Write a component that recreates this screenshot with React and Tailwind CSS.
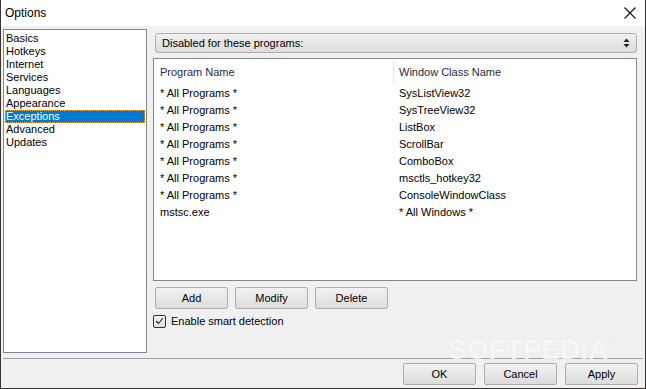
import React from "react";

const font = { fontFamily: '"Liberation Sans", Arial, sans-serif' };

const sections = [
  "Basics",
  "Hotkeys",
  "Internet",
  "Services",
  "Languages",
  "Appearance",
  "Exceptions",
  "Advanced",
  "Updates"
];

const rows = [
  ["* All Programs *", "SysListView32"],
  ["* All Programs *", "SysTreeView32"],
  ["* All Programs *", "ListBox"],
  ["* All Programs *", "ScrollBar"],
  ["* All Programs *", "ComboBox"],
  ["* All Programs *", "msctls_hotkey32"],
  ["* All Programs *", "ConsoleWindowClass"],
  ["mstsc.exe", "* All Windows *"]
];

const Btn = ({ children, className = "" }) => (
  <button
    className={`h-[22px] w-[73px] rounded-[2px] border border-[#adadad] bg-linear-to-b from-[#f2f2f2] to-[#dcdcdc] text-[11px] text-black ${className}`}>
    {children}
  </button>
);

export default function App() {
  return (
    <div
      className="relative flex h-[389px] w-[646px] flex-col overflow-hidden border-x border-b border-[#3a3430] bg-[#f0f0f0] text-[11px] text-black"
      style={font}>
      {/* title bar */}
      <div className="flex h-[26px] items-center justify-between bg-white pl-[4px] pr-[9px]">
        <span className="text-[12px]">Options</span>
        <svg width="12" height="12" viewBox="0 0 12 12">
          <path d="M0.5 0.5 L11.5 11.5 M11.5 0.5 L0.5 11.5" stroke="#111" strokeWidth="1.1" />
        </svg>
      </div>

      <div className="flex h-[331px]">
        {/* sections list */}
        <div className="ml-[2px] mt-[3px] h-[324px] w-[144px] border border-[#828790] bg-white pl-[1px] pr-[1px] pt-[2px]">
          {sections.map((s) => (
            <div
              key={s}
              className={
                s === "Exceptions"
                  ? "flex h-[13px] items-center border border-dotted border-[#f5b041] bg-[#0078d7] text-white"
                  : "flex h-[13px] items-center border border-transparent"
              }>
              {s}
            </div>
          ))}
        </div>

        {/* right panel */}
        <div className="ml-[6px] w-[484px]">
          <div className="ml-[2px] mt-[7px] flex h-[20px] w-[482px] items-center justify-between rounded-[3px] border border-[#acacac] bg-linear-to-b from-[#f0f0f0] to-[#dcdcdc] pl-[6px] pr-[6px]">
            <span className="text-[11px]">Disabled for these programs:</span>
            <svg width="7" height="10" viewBox="0 0 7 10">
              <path d="M3.5 0.5 L6.5 4 H0.5 Z M0.5 6 H6.5 L3.5 9.5 Z" fill="#222" />
            </svg>
          </div>

          <div className="mt-[5px] h-[223px] border border-[#828790] bg-white">
            <div className="flex h-[26px] items-center text-[#1e2a40]">
              <div className="w-[239px] pl-[6px]">Program Name</div>
              <div className="h-[24px] border-l border-[#e5e5e5]" />
              <div className="pl-[5px]">Window Class Name</div>
            </div>
            {rows.map(([a, b], i) => (
              <div key={i} className="flex h-[17px] items-center">
                <div className="w-[240px] pl-[6px]">{a}</div>
                <div className="pl-[5px]">{b}</div>
              </div>
            ))}
          </div>

          <div className="mt-[6px] flex gap-[7px] pl-[2px]">
            <Btn>Add</Btn>
            <Btn>Modify</Btn>
            <Btn>Delete</Btn>
          </div>

          <div className="mt-[4px] flex items-center gap-[5px]">
            <div className="flex h-[13px] w-[13px] items-center justify-center rounded-[2px] border border-[#333] bg-linear-to-b from-[#f4f4f4] to-[#e0e0e0]">
              <svg width="9" height="8" viewBox="0 0 9 8">
                <path d="M1 4 L3.5 6.5 L8 1" stroke="#222" strokeWidth="1.1" fill="none" />
              </svg>
            </div>
            <span>Enable smart detection</span>
          </div>
        </div>
      </div>

      {/* separator + footer */}
      <div className="mx-[2px] mt-[1px] border-t border-[#a0a0a0]" />
      <div className="flex flex-1 items-start justify-end gap-[8px] pr-[7px] pt-[4px]">
        <Btn>OK</Btn>
        <Btn>Cancel</Btn>
        <Btn>Apply</Btn>
      </div>

      {/* watermark */}
      <div
        className="pointer-events-none absolute left-[447px] top-[336px] text-[28px] font-bold leading-[28px] text-white/80"
        style={{ fontFamily: '"Liberation Sans", Arial, sans-serif', textShadow: "0 0 1px rgba(0,0,0,0.12)" }}>
        SOFTPEDIA<span className="align-top text-[8px] leading-[8px]">®</span>
      </div>
    </div>
  );
}
